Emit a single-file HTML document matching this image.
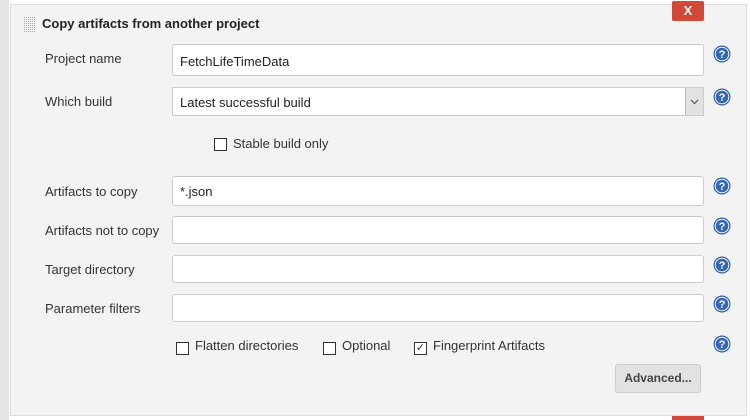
<!DOCTYPE html><html><head><style>
body{margin:0;width:750px;height:420px;background:#fff;font-family:"Liberation Sans",Arial,sans-serif;font-size:13px;color:#333;position:relative;overflow:hidden}
.strip{position:absolute;left:0;top:0;width:9px;height:420px;background:#e4e4e4}
.panel{position:absolute;left:10px;top:4px;width:735px;height:410px;background:#f3f3f3;border:1px solid #ddd}
.a{position:absolute}
.lbl{position:absolute;left:45px}
.inp{position:absolute;left:172px;width:532px;height:28px;background:#fff;border:1px solid #ccc;border-radius:3px;box-sizing:border-box}
.inp span{position:absolute;left:7px;top:7px;color:#222}
.help{position:absolute;left:713px;width:18px;height:18px}
.cb{position:absolute;width:11px;height:11px;border:1px solid #333;background:#fff}
.grip{position:absolute;left:24px;top:17px;width:11px;height:16px}
.grip i{position:absolute;width:1px;height:1px;background:#aaa}
</style></head><body>
<div class="strip"></div>
<div class="panel"></div>
<svg class="grip" viewBox="0 0 11 16"><defs><pattern id="p" width="2" height="2" patternUnits="userSpaceOnUse"><rect width="1" height="1" fill="#aaa"/></pattern></defs><rect width="11" height="16" fill="url(#p)"/></svg>
<div class="a" style="left:42px;top:16px;font-weight:bold;font-size:13px;color:#222">Copy artifacts from another project</div>
<div class="a" style="left:672px;top:1px;width:32px;height:20px;background:#d24939;border-radius:2px;color:#fff;text-align:center;line-height:20px;font-size:13px;font-weight:bold">X</div>

<div class="lbl" style="top:51px">Project name</div>
<div class="inp" style="top:44px;height:32px"><span style="top:9px">FetchLifeTimeData</span></div>
<div class="lbl" style="top:94px">Which build</div>
<div class="inp" style="top:87px;height:29px;border-radius:0"><span>Latest successful build</span>
<div class="a" style="right:0;top:0;width:17px;height:27px;background:#e2e2e2;border-left:1px solid #bbb"><svg width="17" height="27"><path d="M5 12 L8.5 15.5 L12 12" fill="none" stroke="#555" stroke-width="1.2"/></svg></div></div>
<div class="cb" style="left:214px;top:138px"></div><div class="a" style="left:233px;top:136px">Stable build only</div>

<div class="lbl" style="top:184px">Artifacts to copy</div>
<div class="inp" style="top:176px;height:30px"><span>*.json</span></div>
<div class="lbl" style="top:223px">Artifacts not to copy</div>
<div class="inp" style="top:216px"></div>
<div class="lbl" style="top:262px">Target directory</div>
<div class="inp" style="top:255px"></div>
<div class="lbl" style="top:301px">Parameter filters</div>
<div class="inp" style="top:294px"></div>

<div class="cb" style="left:176px;top:342px"></div><div class="a" style="left:195px;top:338px">Flatten directories</div>
<div class="cb" style="left:323px;top:342px"></div><div class="a" style="left:342px;top:338px">Optional</div>
<div class="cb" style="left:414px;top:342px;font-size:11px;line-height:10px;text-align:center">&#10003;</div><div class="a" style="left:433px;top:338px">Fingerprint Artifacts</div>

<div class="a" style="left:615px;top:364px;width:84px;height:27px;background:#e2e2e2;border:1px solid #ccc;border-radius:3px;text-align:center;line-height:27px;font-weight:bold;font-size:12px;color:#444">Advanced...</div>
<div class="a" style="left:672px;top:416px;width:32px;height:4px;background:#d24939"></div>

<svg width="0" height="0" style="position:absolute"><defs><symbol id="h" viewBox="0 0 18 18"><circle cx="9" cy="9" r="8.5" fill="#2c5ea8"/><circle cx="9" cy="9" r="6.8" fill="none" stroke="#fff" stroke-width="1"/><circle cx="9" cy="9" r="6.1" fill="#3567b3"/><text x="9" y="13.2" text-anchor="middle" font-family="Liberation Sans" font-weight="bold" font-size="11" fill="#fff">?</text></symbol></defs></svg>
<svg class="help" style="top:45px"><use href="#h"/></svg>
<svg class="help" style="top:88px"><use href="#h"/></svg>
<svg class="help" style="top:177px"><use href="#h"/></svg>
<svg class="help" style="top:217px"><use href="#h"/></svg>
<svg class="help" style="top:256px"><use href="#h"/></svg>
<svg class="help" style="top:295px"><use href="#h"/></svg>
<svg class="help" style="top:335px"><use href="#h"/></svg>
</body></html>
